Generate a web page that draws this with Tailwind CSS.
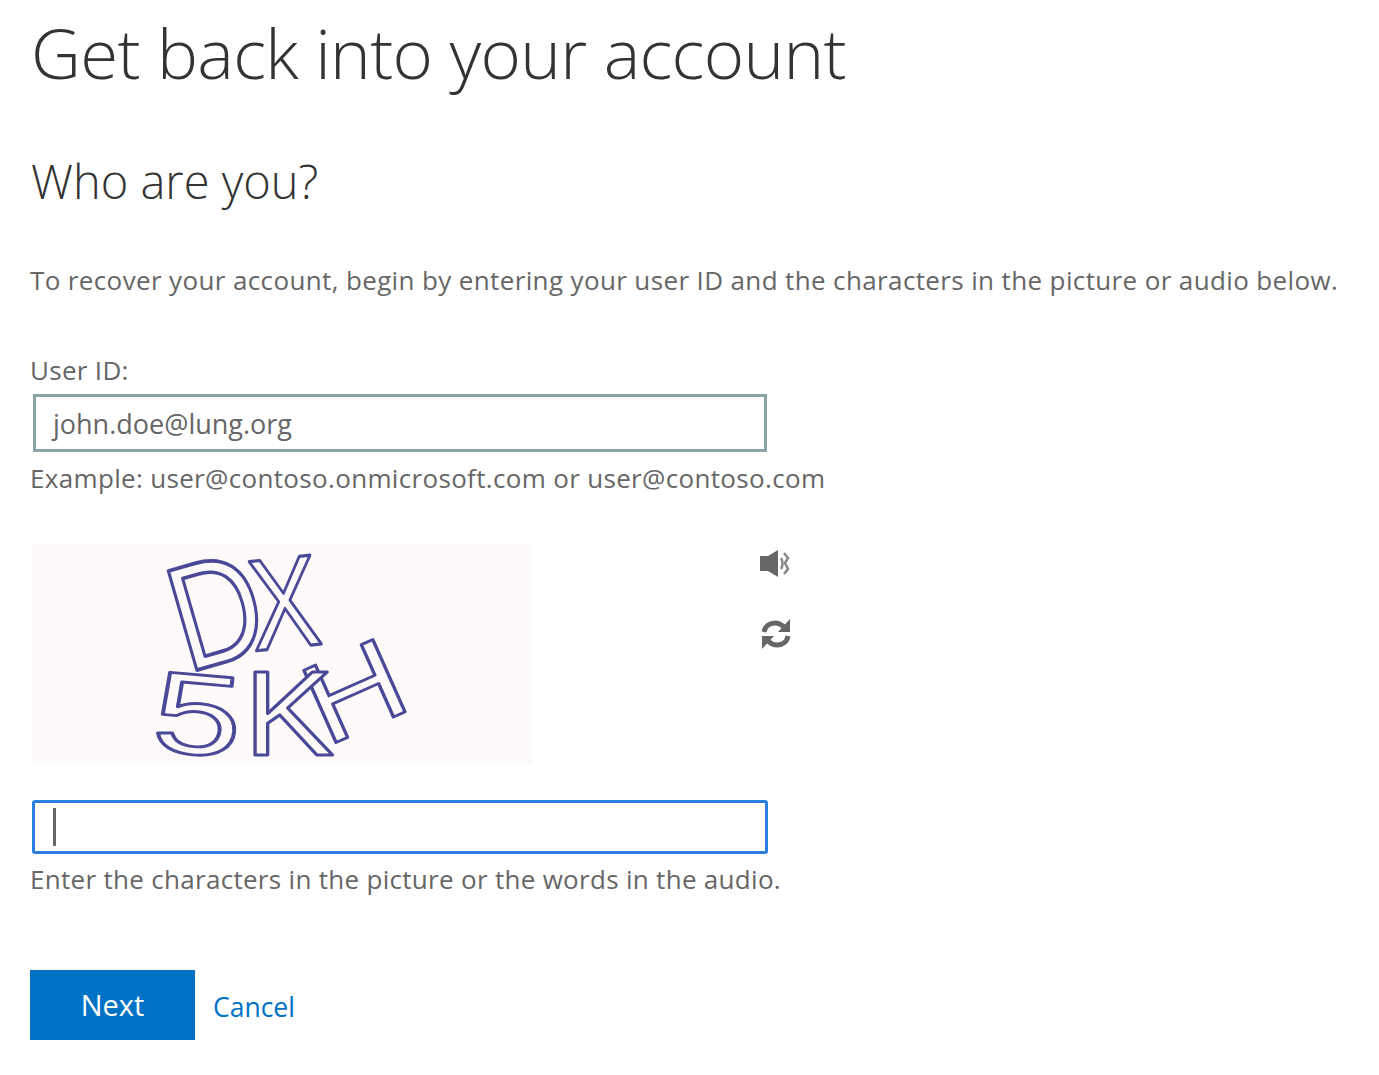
<!DOCTYPE html>
<html>
  <head>
    <meta charset="UTF-8" />
    <title>Get back into your account</title>
    <script src="https://cdn.jsdelivr.net/npm/@tailwindcss/browser@4"></script>
  </head>
  <body class="bg-white font-['Open_Sans',sans-serif] text-[#666] w-[1379px] h-[1075px] overflow-hidden">
    <div class="pl-[30px] pt-[10px]">
      <!-- headings -->
      <h1 class="text-[69px] leading-[84px] font-light text-[#333] pl-[1px] tracking-[-0.7px]">Get back into your account</h1>
      <h2 class="text-[47px] leading-[60px] font-light text-[#333] mt-[57px] pl-[1px]">Who are you?</h2>
      <p class="text-[26px] leading-[36px] tracking-[0.37px] mt-[51px] whitespace-nowrap">To recover your account, begin by entering your user ID and the characters in the picture or audio below.</p>

      <!-- user id -->
      <label class="block text-[26px] leading-[36px] tracking-[0.3px] mt-[54px]">User ID:</label>
      <div class="ml-[3px] mt-[6px] w-[734px] h-[58px] border-[3px] border-[#8aa5a5] flex items-center pl-[17px] pt-[2px] text-[27px]">john.doe@lung.org</div>
      <p class="text-[26px] leading-[36px] tracking-[0.33px] mt-[8px] whitespace-nowrap">Example: user@contoso.onmicrosoft.com or user@contoso.com</p>

      <!-- captcha -->
      <div class="flex mt-[47px] ml-[2px]">
        <svg class="w-[500px] h-[221px] bg-[#fffafa]" viewBox="0 0 500 221" font-family="Liberation Sans, sans-serif" font-size="100" fill="#fffafa" stroke="#4a4a98" stroke-width="2.5" stroke-linejoin="round">
          <defs>
            <filter id="soft"><feGaussianBlur stdDeviation="0.7" /></filter>
          </defs>
          <g filter="url(#soft)">
            <text transform="translate(222 108) rotate(-6) scale(1.05 1.3)">X</text>
            <text transform="translate(155 130) rotate(-16) scale(1.25 1.5)">D</text>
            <text transform="translate(294 204) rotate(-24) scale(1.35 1.15)">H</text>
            <text transform="translate(212 212) scale(1.35 1.2)">K</text>
            <text transform="translate(118 207) rotate(5) scale(1.6 1.15)">5</text>
          </g>
        </svg>
        <div class="ml-[227px] flex flex-col gap-[36px] pt-[3px] blur-[0.5px]">
          <svg class="w-[34px] h-[34px]" viewBox="0 0 34 34">
            <path d="M1 10h8l10-6v27l-10-6H1z" fill="#666" />
            <g fill="none" stroke="#888" stroke-width="2.5">
              <path d="M22 12c2 3 2 8 0 11" />
              <path d="M25 7l4 5-3 5 3 6-4 5" />
            </g>
          </svg>
          <svg class="w-[34px] h-[36px]" viewBox="0 0 34 36">
            <g fill="none" stroke="#666" stroke-width="5">
              <path d="M5 16c1-6 6-9 11-9 4 0 7 2 9 4" />
              <path d="M29 20c-1 6-6 9-11 9-4 0-7-2-9-4" />
            </g>
            <path d="M31 3v13H19z M3 33V20h12z" fill="#666" />
          </svg>
        </div>
      </div>

      <!-- captcha answer -->
      <div class="ml-[2px] mt-[36px] w-[736px] h-[54px] border-[3px] border-[#2b7de0] rounded-[3px] flex items-center pl-[18px]">
        <div class="w-[3px] h-[38px] bg-[#666]"></div>
      </div>
      <p class="text-[26px] leading-[36px] tracking-[0.3px] mt-[7px] whitespace-nowrap">Enter the characters in the picture or the words in the audio.</p>

      <!-- actions -->
      <div class="flex items-center mt-[73px]">
        <button class="w-[165px] h-[70px] bg-[#0072c6] text-white text-[29px]">Next</button>
        <a class="ml-[18px] text-[26.5px] text-[#0072c6] mt-[5px]">Cancel</a>
      </div>
    </div>
  </body>
</html>
